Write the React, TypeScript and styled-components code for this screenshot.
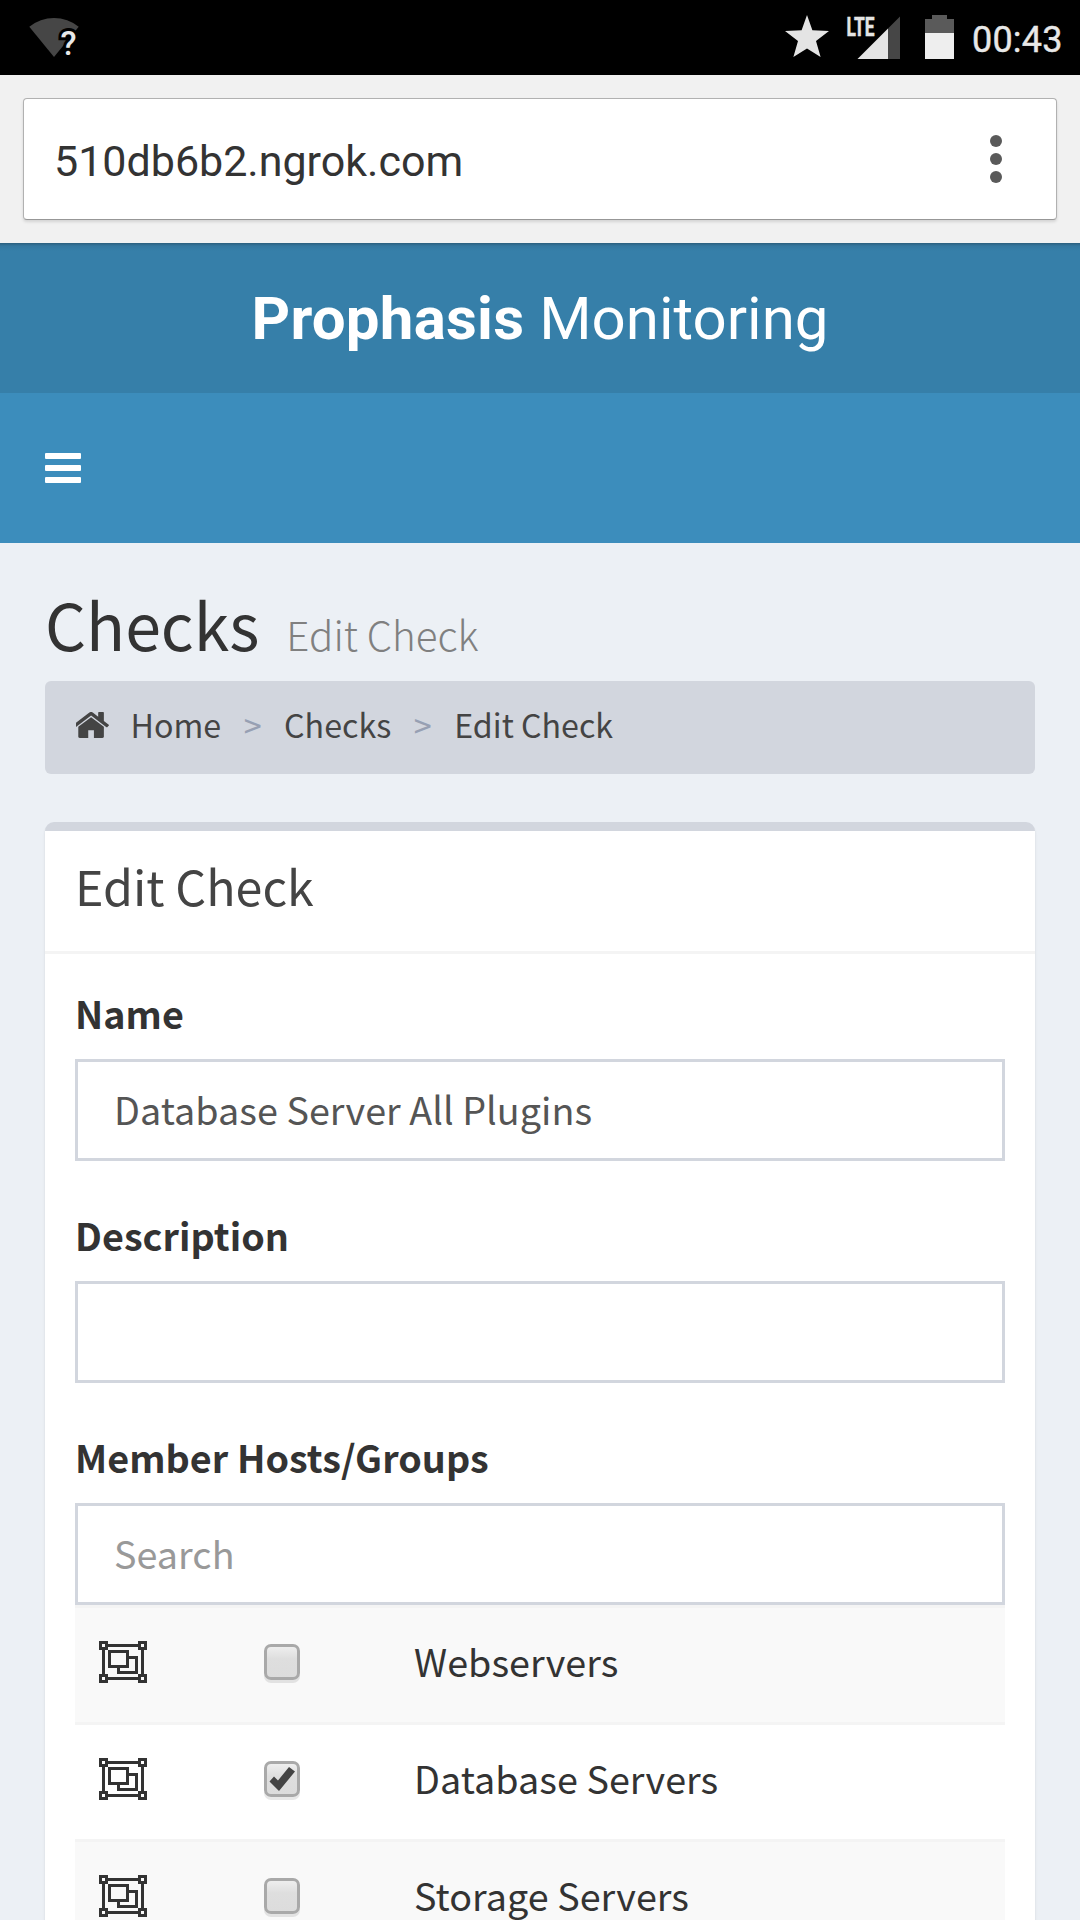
import React, { useState } from "react";
import styled, { createGlobalStyle } from "styled-components";

const sans = `"Noto Sans CJK SC", "Noto Sans", sans-serif`;
const roboto = `Roboto, "Liberation Sans", sans-serif`;

const GlobalStyle = createGlobalStyle`
  * { box-sizing: border-box; }
  html, body { margin: 0; padding: 0; }
  body { background: #ecf0f5; overflow: hidden; }
`;

const Screen = styled.div`
  width: 1080px;
  height: 1920px;
  overflow: hidden;
  display: flex;
  flex-direction: column;
  background: #ecf0f5;
  color: #333;
  font-family: ${sans};
`;

const StatusBar = styled.header`
  flex: none;
  height: 75px;
  display: flex;
  align-items: flex-start;
  justify-content: space-between;
  background: #000;
`;

const StatusIcon = styled.svg`
  display: block;
  flex: none;
`;

const StatusGroup = styled.div`
  display: flex;
  align-items: flex-start;
  padding-right: 18px;
`;

const Clock = styled.span`
  width: 90px;
  margin-left: 17px;
  font: 400 36px/42px ${roboto};
  letter-spacing: 0.2px;
  padding-top: 19px;
  color: #e8e8e8;
  -webkit-text-stroke: 0.4px #e8e8e8;
  white-space: nowrap;
`;

const BrowserBar = styled.div`
  flex: none;
  height: 168px;
  padding: 23px 23px 0;
  background: #f1f1f1;
`;

const AddressBox = styled.div`
  height: 122px;
  display: flex;
  align-items: center;
  justify-content: space-between;
  padding: 0 54px 0 30px;
  background: #fff;
  border: 1px solid #b1b1b1;
  border-bottom-color: #979797;
  border-radius: 4px;
  box-shadow: 0 2px 3px rgba(0, 0, 0, 0.12);
`;

const Address = styled.span`
  font: 400 43px/50px ${roboto};
  color: #333;
  padding-top: 4px;
`;

const MenuDots = styled.div`
  display: flex;
  flex-direction: column;
  gap: 6px;
`;

const Dot = styled.i`
  width: 12px;
  height: 12px;
  border-radius: 50%;
  background: #5a5a5a;
`;

const Brand = styled.div`
  flex: none;
  height: 150px;
  padding-top: 1px;
  background: linear-gradient(#2b5f7e 0, #34779f 3px, #367fa9 8px);
  color: #fff;
  text-align: center;
  font: 400 60px/150px ${roboto};

  b { font-weight: 700; letter-spacing: 0.25px; }
`;

const NavBar = styled.nav`
  flex: none;
  height: 150px;
  display: flex;
  align-items: center;
  padding-left: 45px;
  background: #3c8dbc;
`;

const Toggle = styled.button`
  display: flex;
  flex-direction: column;
  gap: 6px;
  width: 36px;
  padding: 0;
  border: 0;
  background: none;
`;

const ToggleBar = styled.span`
  height: 6px;
  border-radius: 1px;
  background: #fff;
`;

const Content = styled.main`
  padding: 44px 45px 0;
`;

const PageTitle = styled.h1`
  margin: 0 0 22px;
  height: 72px;
  font-weight: 400;
  font-size: 64.4px;
  line-height: 72px;
  white-space: nowrap;
`;

const PageSubtitle = styled.small`
  margin-left: 27px;
  font-size: 40.3px;
  font-weight: 300;
  color: #808080;
`;

const Breadcrumb = styled.ol`
  list-style: none;
  margin: 0 0 48px;
  height: 93px;
  padding: 18px 30px 0;
  display: flex;
  background: #d2d6de;
  border-radius: 6px;
  font-size: 32.2px;
  line-height: 50px;
  color: #444;
`;

const Crumb = styled.li`
  display: flex;

  & + &::before {
    content: ">";
    width: 63px;
    text-align: center;
    color: #97a0b3;
  }
`;

const HomeGlyph = styled.svg`
  width: 33px;
  height: 26px;
  margin: 13px 22px 0 0.5px;
  fill: #444;
`;

const Box = styled.section`
  height: 1200px;
  background: #fff;
  border-top: 9px solid #d2d6de;
  border-radius: 9px;
  box-shadow: 0 3px 3px rgba(0, 0, 0, 0.1);
`;

const BoxHeader = styled.div`
  height: 123px;
  padding: 27px 30px 0;
  border-bottom: 3px solid #f4f4f4;
  font-size: 48.4px;
  line-height: 54px;
  color: #444;
`;

const BoxBody = styled.form`
  padding: 30px 30px 0;
`;

const Field = styled.div`
  margin-bottom: 45px;
`;

const Label = styled.label`
  display: block;
  height: 75px;
  font-size: 37.7px;
  font-weight: 700;
  letter-spacing: 0.05px;
  line-height: 57px;
`;

const TextInput = styled.input`
  display: block;
  width: 100%;
  height: 102px;
  padding: 0 36px 3px;
  border: 3px solid #d2d6de;
  border-radius: 0;
  background: #fff;
  outline: 0;
  color: #555;
  font: 400 37.7px ${sans};
  letter-spacing: 0.05px;

  &::placeholder { color: #999; opacity: 1; }
`;

const Row = styled.div<{ $striped: boolean }>`
  height: 117px;
  display: grid;
  grid-template-columns: 165px 150px 1fr;
  border-top: 3px solid #f4f4f4;
  background: ${(p) => (p.$striped ? "#f9f9f9" : "#fff")};
  padding-left: 24px;
`;

const GroupGlyph = styled.svg`
  display: block;
  width: 48px;
  height: 42px;
  margin-top: 33px;
`;

const Check = styled.button`
  display: block;
  width: 36px;
  height: 36px;
  margin-top: 36px;
  padding: 0;
  border: 3px solid #a9a9a9;
  border-radius: 7px;
  background: linear-gradient(#eee 0, #dedede 12px, #dcdcdc 100%);
  box-shadow: 0 3px 0 rgba(0, 0, 0, 0.09);

  svg { display: block; width: 30px; height: 30px; fill: #444; }
`;

const HostName = styled.span`
  padding-top: 23px;
  font-size: 37.7px;
  letter-spacing: 0.05px;
  line-height: 60px;
`;

function GroupIcon() {
  return (
    <GroupGlyph viewBox="0 0 48 42" fill="none" stroke="#333" strokeWidth="3" shapeRendering="crispEdges">
      <path d="M9 4.5H39M9 37.5H39M4.5 9V33M43.5 9V33" />
      <path d="M1.5 1.5h6v6h-6zM40.5 1.5h6v6h-6zM1.5 34.5h6v6h-6zM40.5 34.5h6v6h-6z" />
      <path d="M10.5 10.5h18v15h-18z" />
      <path d="M30 16.5h7.5v15h-18V27" />
    </GroupGlyph>
  );
}

const initialHosts = [
  { name: "Webservers", checked: false },
  { name: "Database Servers", checked: true },
  { name: "Storage Servers", checked: false },
];

export default function App() {
  const [hosts, setHosts] = useState(initialHosts);
  const toggle = (index: number) =>
    setHosts(hosts.map((h, i) => (i === index ? { ...h, checked: !h.checked } : h)));

  return (
    <Screen>
      <GlobalStyle />
      <StatusBar>
        <StatusIcon width="100" height="75">
          <path d="M29.3 26.7A39.4 39.4 0 0 1 78.7 26.7L54 57Z" fill="#464646" />
          <g fontFamily="Roboto, sans-serif" fontWeight="500" fontSize="33">
            <text x="60.5" y="55" fill="#000" stroke="#000" strokeWidth="6">?</text>
            <text x="60.5" y="55" fill="#e8e8e8">?</text>
          </g>
        </StatusIcon>
        <StatusGroup>
          <StatusIcon width="170" height="75">
            <path d="M22 15L27.4 30.2L44 31L31 41L35.6 57L22 48.6L8.4 57L13 41L0 31L16.6 30.2Z" fill="#e4e4e4" />
            <text x="61.5" y="35.500" fill="#e4e4e4" stroke="#e4e4e4" strokeWidth="0.5" fontFamily="Roboto, sans-serif" fontWeight="700" fontSize="25.500" textLength="28" lengthAdjust="spacingAndGlyphs">LTE</text>
            <path d="M72.5 59L103 28.500V59Z" fill="#e4e4e4" />
            <path d="M103 28.500L115 16.500V59H103Z" fill="#464646" />
            <path d="M140 19H147V15H162V19H169V33H140Z" fill="#5a5a5a" />
            <path d="M140 33H169V59H140Z" fill="#eee" />
          </StatusIcon>
          <Clock>00:43</Clock>
        </StatusGroup>
      </StatusBar>
      <BrowserBar>
        <AddressBox>
          <Address>510db6b2.ngrok.com</Address>
          <MenuDots>
            <Dot />
            <Dot />
            <Dot />
          </MenuDots>
        </AddressBox>
      </BrowserBar>
      <Brand>
        <b>Prophasis</b> Monitoring
      </Brand>
      <NavBar>
        <Toggle type="button" aria-label="Toggle navigation">
          <ToggleBar />
          <ToggleBar />
          <ToggleBar />
        </Toggle>
      </NavBar>
      <Content>
        <PageTitle>
          Checks<PageSubtitle>Edit Check</PageSubtitle>
        </PageTitle>
        <Breadcrumb>
          <Crumb>
            <HomeGlyph viewBox="153 255 1486 1281" preserveAspectRatio="none">
              <path d="M1408 992v480q0 26-19 45t-45 19h-384v-384h-256v384h-384q-26 0-45-19t-19-45v-480q0-1 .5-3t.5-3l575-474 575 474q1 2 1 6zm223-69l-62 74q-8 9-21 11h-3q-13 0-21-7l-692-577-692 577q-12 8-24 7-13-2-21-11l-62-74q-8-10-7-23.500t11-21.500l719-599q32-26 76-26t76 26l244 204v-195q0-14 9-23t23-9h192q14 0 23 9t9 23v408l219 182q10 8 11 21.500t-7 23.500z" />
            </HomeGlyph>
            Home
          </Crumb>
          <Crumb>Checks</Crumb>
          <Crumb>Edit Check</Crumb>
        </Breadcrumb>
        <Box>
          <BoxHeader>Edit Check</BoxHeader>
          <BoxBody>
            <Field>
              <Label htmlFor="name">Name</Label>
              <TextInput id="name" defaultValue="Database Server All Plugins" />
            </Field>
            <Field>
              <Label htmlFor="description">Description</Label>
              <TextInput id="description" />
            </Field>
            <Field>
              <Label htmlFor="members">Member Hosts/Groups</Label>
              <TextInput id="members" placeholder="Search" />
              {hosts.map((host, i) => (
                <Row key={host.name} $striped={i % 2 === 0}>
                  <GroupIcon />
                  <Check type="button" role="checkbox" aria-checked={host.checked} aria-label={host.name} onClick={() => toggle(i)}>
                    {host.checked && (
                      <svg viewBox="0 0 30 30">
                        <path d="M2.500 17.500L7 12.500L11 16.500L22 3L28 7.500L12 27Z" />
                      </svg>
                    )}
                  </Check>
                  <HostName>{host.name}</HostName>
                </Row>
              ))}
            </Field>
          </BoxBody>
        </Box>
      </Content>
    </Screen>
  );
}
